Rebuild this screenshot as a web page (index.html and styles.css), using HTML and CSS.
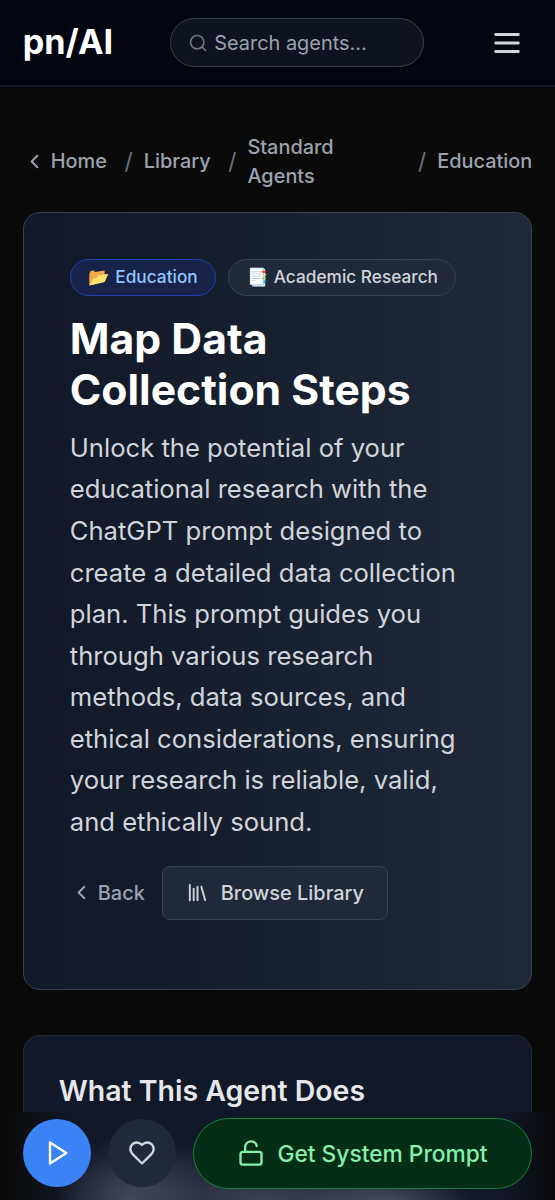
FILE: index.html
```html
<!DOCTYPE html>
<html lang="en">
<head>
    <meta charset="UTF-8">
    <meta name="viewport" content="width=device-width, initial-scale=1.0">
    <title>Map Data Collection Steps</title>
    <link rel="stylesheet" href="styles.css">
</head>
<body>
    <header class="header">
        <a class="logo" href="#">pn/AI</a>
        <div class="search">
            <svg class="search-icon" viewBox="0 0 24 24"><circle cx="11" cy="11" r="8"/><path d="m21 21-4.3-4.3"/></svg>
            <span>Search agents...</span>
        </div>
        <button class="menu-btn" aria-label="Menu">
            <svg viewBox="0 0 24 24"><path d="M4 6h16M4 12h16M4 18h16"/></svg>
        </button>
    </header>

    <main class="content">
        <nav class="breadcrumb">
            <a class="crumb crumb-home" href="#">
                <svg class="chevron" viewBox="0 0 24 24"><path d="m15 18-6-6 6-6"/></svg>
                Home
            </a>
            <span class="slash">/</span>
            <a class="crumb" href="#">Library</a>
            <span class="slash">/</span>
            <a class="crumb crumb-wrap" href="#">Standard Agents</a>
            <span class="slash">/</span>
            <a class="crumb" href="#">Education</a>
        </nav>

        <section class="hero">
            <div class="badges">
                <span class="badge badge-blue"><span>📂</span>Education</span>
                <span class="badge"><span>📑</span>Academic Research</span>
            </div>
            <h1>Map Data Collection Steps</h1>
            <p class="description">Unlock the potential of your educational research with the ChatGPT prompt designed to create a detailed data collection plan. This prompt guides you through various research methods, data sources, and ethical considerations, ensuring your research is reliable, valid, and ethically sound.</p>
            <div class="actions">
                <a class="back" href="#">
                    <svg class="chevron" viewBox="0 0 24 24"><path d="m15 18-6-6 6-6"/></svg>
                    Back
                </a>
                <a class="browse" href="#">
                    <svg viewBox="0 0 24 24"><path d="m16 6 4 14M12 6v14M8 8v12M4 4v16"/></svg>
                    Browse Library
                </a>
            </div>
        </section>

        <section class="panel">
            <h2>What This Agent Does</h2>
        </section>
    </main>

    <div class="bottom-bar">
        <button class="round-btn play" aria-label="Play">
            <svg viewBox="0 0 24 24"><path d="m6 3 14 9-14 9V3z"/></svg>
        </button>
        <button class="round-btn like" aria-label="Like">
            <svg viewBox="0 0 24 24"><path d="M19 14c1.49-1.46 3-3.21 3-5.5A5.5 5.5 0 0 0 16.5 3c-1.76 0-3 .5-4.5 2-1.5-1.5-2.74-2-4.5-2A5.5 5.5 0 0 0 2 8.5c0 2.3 1.5 4.05 3 5.5l7 7Z"/></svg>
        </button>
        <button class="prompt-btn">
            <svg viewBox="0 0 24 24"><rect x="3" y="11" width="18" height="11" rx="2"/><path d="M7 11V7a5 5 0 0 1 9.9-1"/></svg>
            Get System Prompt
        </button>
    </div>
</body>
</html>
```
FILE: styles.css
```css
html {
    font-size: 22.77px;
}
* {
    box-sizing: border-box;
}
body {
    margin: 0;
    background: #0a0a0a;
    color: #fff;
    font-family: Inter, sans-serif;
}
a {
    color: inherit;
    text-decoration: none;
}
button {
    border: none;
    padding: 0;
    background: none;
    color: inherit;
    font-family: inherit;
}
svg {
    flex-shrink: 0;
    fill: none;
    stroke: currentColor;
    stroke-width: 2;
    stroke-linecap: round;
    stroke-linejoin: round;
}

/* Header */
.header {
    display: flex;
    align-items: center;
    justify-content: space-between;
    height: 87px;
    padding: 0 1rem;
    background: #030610;
    border-bottom: 2px solid #111625;
}
.logo {
    width: 147px;
    padding-bottom: 2px;
    font-size: 1.5rem;
    font-weight: 700;
}
.search {
    display: flex;
    align-items: center;
    gap: 6.5px;
    width: 254px;
    height: 49px;
    margin-right: auto;
    padding-left: 17px;
    border: 1px solid #374151;
    border-radius: 25px;
    background: #0d1420;
    color: #9ca3af;
    font-size: 0.875rem;
}
.search-icon {
    width: 20px;
    height: 20px;
    color: #6b7280;
}
.menu-btn {
    display: flex;
    margin-right: 8px;
    color: #d1d5db;
}
.menu-btn svg {
    width: 34px;
    height: 34px;
}

/* Breadcrumb */
.content {
    padding: 46px 1rem 0;
}
.breadcrumb {
    display: flex;
    align-items: center;
    height: 57px;
    margin-bottom: 22px;
    color: #9ca3af;
    font-size: 0.875rem;
    font-weight: 500;
    line-height: 1.25rem;
}
.crumb-home {
    display: flex;
    align-items: center;
    gap: 5px;
}
.chevron {
    width: 23px;
    height: 23px;
}
.crumb-wrap {
    flex: 1;
    padding-right: 60px;
}
.slash {
    margin: 0 11px 0 17.5px;
    color: #6b7280;
    font-size: 1rem;
    font-weight: 400;
}

/* Hero card */
.hero {
    height: 778px;
    padding: 46px;
    border: 1px solid #374151;
    border-radius: 17px;
    background: linear-gradient(to right, #111827, #1f2937);
}
.badges {
    display: flex;
    gap: 12px;
    margin-bottom: 17px;
}
.badge {
    display: flex;
    align-items: center;
    gap: 6px;
    height: 37px;
    padding: 0 17.5px 2px;
    border: 1px solid #374151;
    border-radius: 19px;
    background: #1f2937;
    color: #d1d5db;
    font-size: 0.757rem;
    font-weight: 500;
    letter-spacing: 0.02px;
    white-space: nowrap;
}
.badge-blue {
    border-color: #1e40af;
    background: #172349;
    color: #93c5fd;
}
h1 {
    margin: 0 0 0.5rem;
    font-size: 1.875rem;
    font-weight: 700;
    line-height: 2.25rem;
}
.description {
    margin: 0 0 1rem;
    color: #d1d5db;
    font-size: 1.125rem;
    line-height: 1.825rem;
}
.actions {
    display: flex;
    align-items: center;
    height: 55px;
    font-size: 0.875rem;
    font-weight: 500;
}
.back {
    display: flex;
    align-items: center;
    gap: 5px;
    margin-right: 17px;
    color: #9ca3af;
}
.browse {
    display: flex;
    align-items: center;
    gap: 12px;
    height: 54px;
    padding: 0 23px;
    border: 1px solid #374151;
    border-radius: 8px;
    background: #1f2937;
    color: #d1d5db;
}
.browse svg {
    width: 23px;
    height: 23px;
}

/* Overview panel */
.panel {
    height: 165px;
    margin-top: 45px;
    padding: 35px;
    border: 1px solid #1f2937;
    border-bottom: none;
    border-radius: 17px 17px 0 0;
    background: #111827;
}
h2 {
    margin: 0;
    color: #e5e7eb;
    font-size: 1.25rem;
    font-weight: 600;
    line-height: 1.75rem;
}

/* Fixed action bar */
.bottom-bar {
    position: fixed;
    right: 0;
    bottom: 0;
    left: 0;
    display: flex;
    align-items: center;
    gap: 17px;
    height: 88px;
    padding: 0 1rem 6px;
    background:
        radial-gradient(ellipse 85px 22px at 385px 100%, rgba(120, 125, 140, 0.4), transparent),
        radial-gradient(ellipse 75px 65px at 130px 100%, rgba(120, 125, 140, 0.4), transparent),
        radial-gradient(ellipse 210px 65px at 265px 100%, rgba(120, 125, 140, 0.4), transparent),
        linear-gradient(to right, #0a0a0a, #111827 80px, #111827 500px, #0a0a0c);
}
.round-btn {
    display: flex;
    align-items: center;
    justify-content: center;
    width: 68px;
    height: 68px;
    border-radius: 50%;
}
.round-btn svg,
.prompt-btn svg {
    width: 28px;
    height: 28px;
}
.play {
    background: #3b82f6;
}
.like {
    background: #1f2937;
    color: #d1d5db;
}
.prompt-btn {
    display: flex;
    flex: 1;
    align-items: center;
    justify-content: center;
    gap: 12px;
    height: 71px;
    border: 1px solid #15803d;
    border-radius: 36px;
    background: #052e16;
    color: #86efac;
    font-size: 1rem;
    font-weight: 500;
}
```
